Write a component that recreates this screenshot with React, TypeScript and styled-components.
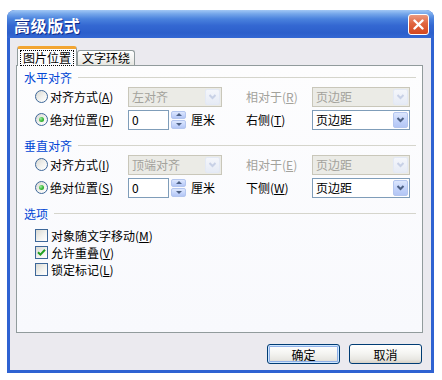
import React from 'react';
import styled, { createGlobalStyle } from 'styled-components';

const GlobalStyle = createGlobalStyle`
  body {
    margin: 0;
    background: #ffffff;
    font-family: "Noto Sans CJK SC", "Liberation Sans", sans-serif;
    font-size: 12px;
  }
`;

const App = () => {
  return (
    <>
      <GlobalStyle />
      <Page>
        <Window>
          <TitleBar>
            <Title>高级版式</Title>
            <CloseButton>
              <svg width="11" height="11" viewBox="0 0 11 11">
                <path d="M1.5 1.5 L9.5 9.5 M9.5 1.5 L1.5 9.5" stroke="#fff" strokeWidth="2.4" strokeLinecap="round" />
              </svg>
            </CloseButton>
          </TitleBar>
          <Body>
            <TabStrip>
              <Tab $active>
                <Focus>图片位置</Focus>
              </Tab>
              <Tab>文字环绕</Tab>
            </TabStrip>
            <Panel>
              <Legend>水平对齐</Legend>
              <FieldRow>
                <Choice>
                  <Radio />
                  <span>
                    对齐方式(<u>A</u>)
                  </span>
                </Choice>
                <Select $disabled $width={94}>
                  <SelectText>左对齐</SelectText>
                  <Arrow $disabled>
                    <Chevron />
                  </Arrow>
                </Select>
                <FieldLabel $disabled>
                  相对于(<u>R</u>)
                </FieldLabel>
                <Select $disabled $width={98}>
                  <SelectText>页边距</SelectText>
                  <Arrow $disabled>
                    <Chevron />
                  </Arrow>
                </Select>
              </FieldRow>
              <FieldRow>
                <Choice>
                  <Radio $checked />
                  <span>
                    绝对位置(<u>P</u>)
                  </span>
                </Choice>
                <SpinGroup>
                  <NumberBox>0</NumberBox>
                  <Spinner>
                    <SpinButton>
                      <Triangle $up />
                    </SpinButton>
                    <SpinButton>
                      <Triangle />
                    </SpinButton>
                  </Spinner>
                  <Unit>厘米</Unit>
                </SpinGroup>
                <FieldLabel>
                  右侧(<u>T</u>)
                </FieldLabel>
                <Select $width={98}>
                  <SelectText>页边距</SelectText>
                  <Arrow>
                    <Chevron />
                  </Arrow>
                </Select>
              </FieldRow>

              <Legend $spaced>垂直对齐</Legend>
              <FieldRow>
                <Choice>
                  <Radio />
                  <span>
                    对齐方式(<u>I</u>)
                  </span>
                </Choice>
                <Select $disabled $width={94}>
                  <SelectText>顶端对齐</SelectText>
                  <Arrow $disabled>
                    <Chevron />
                  </Arrow>
                </Select>
                <FieldLabel $disabled>
                  相对于(<u>E</u>)
                </FieldLabel>
                <Select $disabled $width={98}>
                  <SelectText>页边距</SelectText>
                  <Arrow $disabled>
                    <Chevron />
                  </Arrow>
                </Select>
              </FieldRow>
              <FieldRow>
                <Choice>
                  <Radio $checked />
                  <span>
                    绝对位置(<u>S</u>)
                  </span>
                </Choice>
                <SpinGroup>
                  <NumberBox>0</NumberBox>
                  <Spinner>
                    <SpinButton>
                      <Triangle $up />
                    </SpinButton>
                    <SpinButton>
                      <Triangle />
                    </SpinButton>
                  </Spinner>
                  <Unit>厘米</Unit>
                </SpinGroup>
                <FieldLabel>
                  下侧(<u>W</u>)
                </FieldLabel>
                <Select $width={98}>
                  <SelectText>页边距</SelectText>
                  <Arrow>
                    <Chevron />
                  </Arrow>
                </Select>
              </FieldRow>

              <Legend $spaced>选项</Legend>
              <CheckList>
                <CheckRow>
                  <CheckBox />
                  <span>
                    对象随文字移动(<u>M</u>)
                  </span>
                </CheckRow>
                <CheckRow>
                  <CheckBox>
                    <svg width="9" height="9" viewBox="0 0 9 9">
                      <path d="M1 4.2 L3.4 6.6 L8 1.8" stroke="#21a121" strokeWidth="2" fill="none" />
                    </svg>
                  </CheckBox>
                  <span>
                    允许重叠(<u>V</u>)
                  </span>
                </CheckRow>
                <CheckRow>
                  <CheckBox />
                  <span>
                    锁定标记(<u>L</u>)
                  </span>
                </CheckRow>
              </CheckList>
            </Panel>
            <Buttons>
              <Button $default>确定</Button>
              <Button>取消</Button>
            </Buttons>
          </Body>
        </Window>
      </Page>
    </>
  );
};

export default App;

const Chevron = () => (
  <svg width="9" height="7" viewBox="0 0 9 7">
    <path d="M1.5 2 L4.5 5 L7.5 2" stroke="currentColor" strokeWidth="2" fill="none" />
  </svg>
);

const Page = styled.div`
  padding: 10px 0 0 7px;
`;

const Window = styled.div`
  width: 427px;
  height: 363px;
  display: flex;
  flex-direction: column;
  border-radius: 8px 8px 0 0;
  overflow: hidden;
  background: #2e62d2;
`;

const TitleBar = styled.div`
  height: 28px;
  flex: none;
  display: flex;
  align-items: center;
  justify-content: space-between;
  padding: 1px 5px 0 7px;
  box-sizing: border-box;
  background: linear-gradient(
    180deg,
    #a2c8f5 0%,
    #74a6ea 14%,
    #4a82dd 32%,
    #3468d2 55%,
    #2c5fcb 82%,
    #3468d4 100%
  );
`;

const Title = styled.div`
  color: #ffffff;
  font-size: 16px;
  font-weight: bold;
  letter-spacing: 0.6px;
  text-shadow: 1px 1px 0 #0f2b8c;
`;

const CloseButton = styled.div`
  width: 21px;
  height: 21px;
  box-sizing: border-box;
  display: flex;
  align-items: center;
  justify-content: center;
  border: 1px solid #ffffff;
  border-radius: 3px;
  background: linear-gradient(180deg, #ec9a80 0%, #e0653f 45%, #d4471f 100%);
`;

const Body = styled.div`
  flex: 1;
  display: flex;
  flex-direction: column;
  margin: 0 3px 3px 3px;
  padding: 8px 8px 6px 6px;
  background: #ebeaef;
`;

const TabStrip = styled.div`
  height: 19px;
  display: flex;
  align-items: flex-end;
  padding-left: 1px;
`;

const Tab = styled.div<{ $active?: boolean }>`
  position: relative;
  z-index: ${(p) => (p.$active ? 1 : 0)};
  box-sizing: border-box;
  height: ${(p) => (p.$active ? '20px' : '15px')};
  margin-bottom: ${(p) => (p.$active ? '-1px' : '0')};
  padding: ${(p) => (p.$active ? '1px 2px 0' : '0 4px')};
  display: flex;
  align-items: center;
  justify-content: center;
  border: 1px solid #919b9c;
  border-bottom: none;
  border-top: ${(p) => (p.$active ? '3px solid #f2a533' : '1px solid #919b9c')};
  border-radius: 3px 3px 0 0;
  background: ${(p) =>
    p.$active ? '#fcfcfe' : 'linear-gradient(180deg, #ffffff 0%, #f1f1ef 60%, #e6e6e0 100%)'};
  color: #000;
  font-size: 12px;
  line-height: 12px;
`;

const Focus = styled.span`
  border: 1px dotted #000;
  padding: 1px 2px;
`;

const Panel = styled.div`
  height: 268px;
  box-sizing: border-box;
  border: 1px solid #919b9c;
  background: linear-gradient(180deg, #fdfdfe 0%, #f8f9fd 100%);
  padding: 3px 6px 0 7px;
`;

const Legend = styled.div<{ $spaced?: boolean }>`
  height: 16px;
  display: flex;
  align-items: center;
  gap: 6px;
  margin-top: ${(p) => (p.$spaced ? '6px' : '0')};
  color: #0046d5;
  &::after {
    content: '';
    flex: 1;
    height: 1px;
    background: #d5d5cc;
  }
`;

const FieldRow = styled.div`
  height: 23px;
  display: grid;
  grid-template-columns: 93px 118px 66px 98px;
  align-items: center;
  padding-left: 11px;
  color: #000;
`;

const Choice = styled.label`
  display: flex;
  align-items: center;
  gap: 2px;
  white-space: nowrap;
`;

const Radio = styled.span<{ $checked?: boolean }>`
  position: relative;
  flex: none;
  width: 13px;
  height: 13px;
  box-sizing: border-box;
  border-radius: 50%;
  border: 1px solid #3d6799;
  background: linear-gradient(135deg, #d9d9d2 0%, #f2f2ef 55%, #ffffff 100%);
  &::after {
    content: '';
    display: ${(p) => (p.$checked ? 'block' : 'none')};
    position: absolute;
    left: 3px;
    top: 3px;
    width: 5px;
    height: 5px;
    border-radius: 50%;
    background: radial-gradient(circle at 35% 35%, #a4eca4 0%, #3dbb3d 50%, #1e931e 100%);
  }
`;

const FieldLabel = styled.span<{ $disabled?: boolean }>`
  color: ${(p) => (p.$disabled ? '#a3a29c' : '#000')};
  white-space: nowrap;
`;

const Select = styled.div<{ $disabled?: boolean; $width: number }>`
  width: ${(p) => p.$width}px;
  height: 20px;
  box-sizing: border-box;
  display: flex;
  align-items: center;
  padding: 1px;
  border: 1px solid ${(p) => (p.$disabled ? '#c9c7ba' : '#7f9db9')};
  background: ${(p) => (p.$disabled ? '#ebebe6' : '#ffffff')};
  color: ${(p) => (p.$disabled ? '#a3a29c' : '#000')};
`;

const SelectText = styled.span`
  flex: 1;
  padding-left: 2px;
  white-space: nowrap;
`;

const Arrow = styled.span<{ $disabled?: boolean }>`
  width: 15px;
  height: 16px;
  box-sizing: border-box;
  display: flex;
  align-items: center;
  justify-content: center;
  border: 1px solid ${(p) => (p.$disabled ? '#e3e9f5' : '#b4c6ef')};
  border-radius: 2px;
  background: ${(p) =>
    p.$disabled
      ? 'linear-gradient(180deg, #f4f6fb 0%, #e6ebf5 100%)'
      : 'linear-gradient(180deg, #dde7fd 0%, #c4d4fb 50%, #b3c6f5 100%)'};
  color: ${(p) => (p.$disabled ? '#c8d1e6' : '#4d6185')};
`;

const SpinGroup = styled.div`
  display: flex;
  align-items: center;
`;

const NumberBox = styled.div`
  width: 41px;
  height: 20px;
  box-sizing: border-box;
  border: 1px solid #7f9db9;
  background: #ffffff;
  padding-left: 3px;
  line-height: 18px;
`;

const Spinner = styled.div`
  width: 15px;
  height: 20px;
  margin-left: 2px;
  display: flex;
  flex-direction: column;
  gap: 1px;
  padding: 1px 0;
  box-sizing: border-box;
`;

const SpinButton = styled.span`
  flex: 1;
  display: flex;
  align-items: center;
  justify-content: center;
  border: 1px solid #b4c6ef;
  border-radius: 2px;
  background: linear-gradient(180deg, #dde7fd 0%, #c4d4fb 60%, #b3c6f5 100%);
`;

const Triangle = styled.span<{ $up?: boolean }>`
  width: 0;
  height: 0;
  border-left: 3px solid transparent;
  border-right: 3px solid transparent;
  border-${(p) => (p.$up ? 'bottom' : 'top')}: 3px solid #4d6185;
`;

const Unit = styled.span`
  margin-left: 5px;
`;

const CheckList = styled.div`
  display: flex;
  flex-direction: column;
  padding: 6px 0 0 11px;
`;

const CheckRow = styled.label`
  height: 17px;
  display: flex;
  align-items: center;
  gap: 3px;
  color: #000;
`;

const CheckBox = styled.span`
  width: 13px;
  height: 13px;
  box-sizing: border-box;
  flex: none;
  display: flex;
  align-items: center;
  justify-content: center;
  border: 1px solid #3d6799;
  background: linear-gradient(135deg, #d9d9d2 0%, #f2f2ef 55%, #ffffff 100%);
`;

const Buttons = styled.div`
  display: flex;
  justify-content: flex-end;
  gap: 9px;
  margin-top: 11px;
  padding-right: 1px;
`;

const Button = styled.button<{ $default?: boolean }>`
  width: 73px;
  height: 20px;
  padding: 0;
  box-sizing: border-box;
  border: 1px solid #003c74;
  border-radius: 3px;
  background: linear-gradient(180deg, #ffffff 0%, #f5f5f2 45%, #e8e7e2 80%, #d6d0c5 100%);
  font-family: "Noto Sans CJK SC", "Liberation Sans", sans-serif;
  font-size: 12px;
  color: #000;
  box-shadow: ${(p) =>
    p.$default ? 'inset 0 0 0 1px #cee7ff, inset 0 0 0 2px #8fb0e8' : 'none'};
`;
